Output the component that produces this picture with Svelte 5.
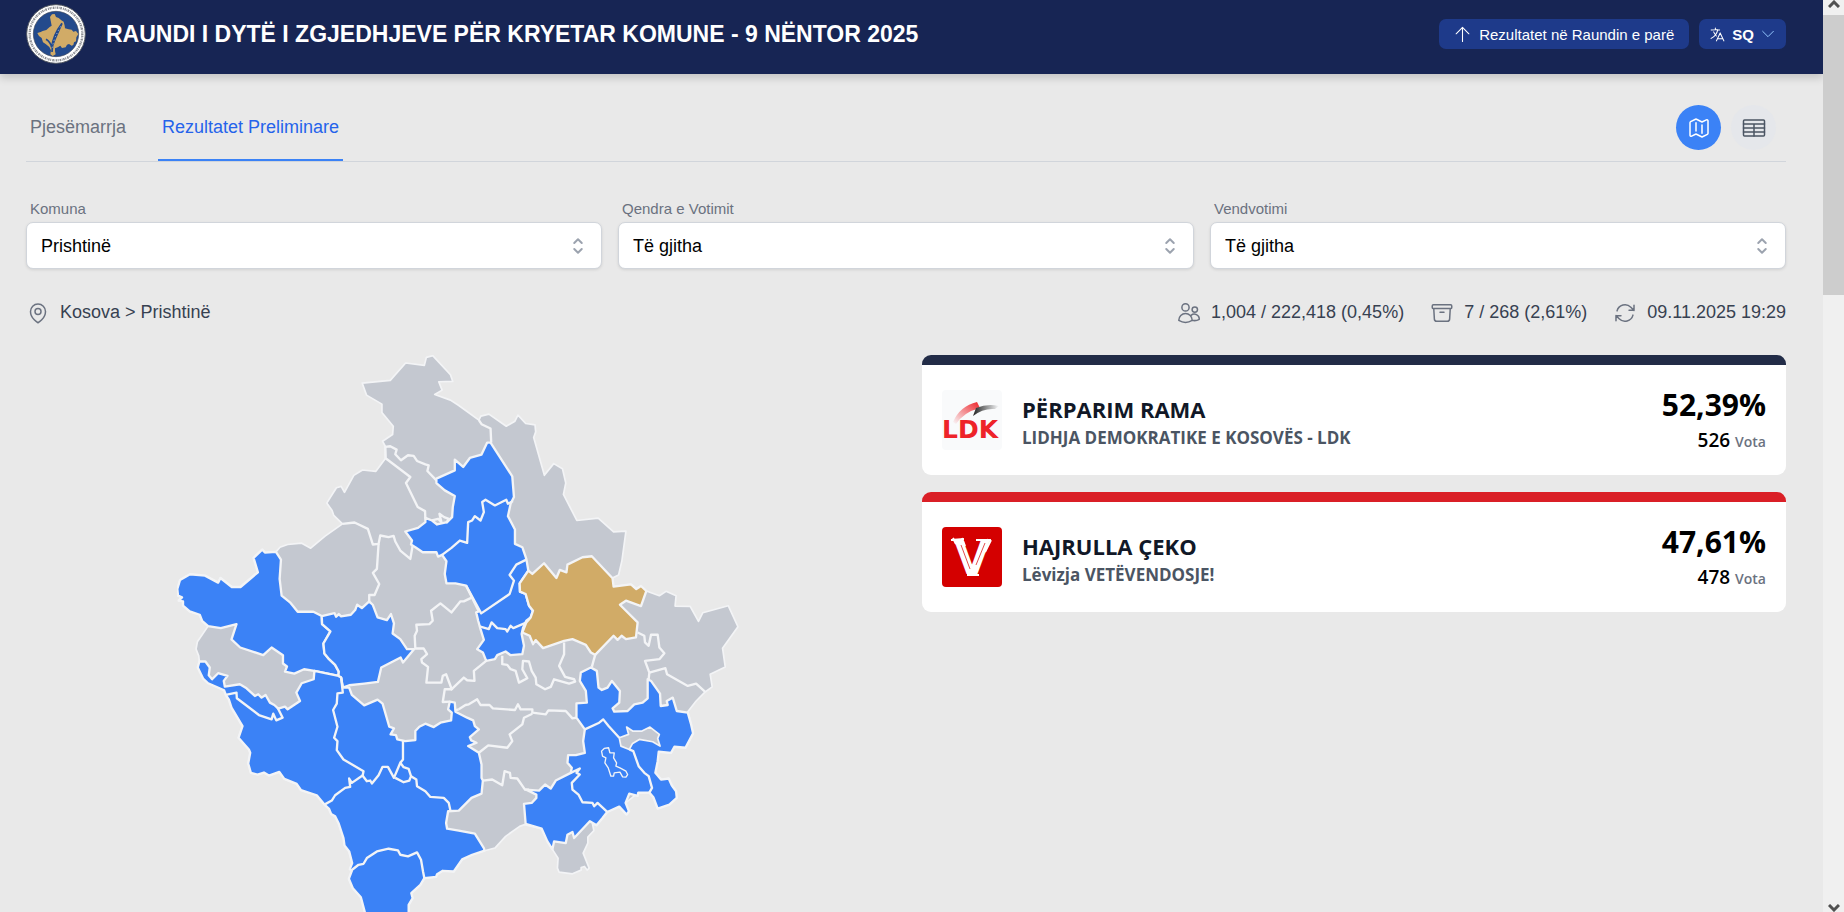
<script>
  let komuna = $state('Prishtinë');
  let qendra = $state('Të gjitha');
  let vendvotimi = $state('Të gjitha');

  const candidates = [
    {
      id: 'ldk',
      name: 'PËRPARIM RAMA',
      party: 'LIDHJA DEMOKRATIKE E KOSOVËS - LDK',
      percent: '52,39%',
      votes: 526,
      color: '#222c47',
    },
    {
      id: 'lvv',
      name: 'HAJRULLA ÇEKO',
      party: 'Lëvizja VETËVENDOSJE!',
      percent: '47,61%',
      votes: 478,
      color: '#da1f26',
    },
  ];

  const country =
    '611,129 695,121 741,69 797,76 803,52 822,47 875,104 882,124 840,125 850,150 828,163 875,180 900,196 960,240 966,228 990,222 1042,258 1068,243 1077,225 1100,250 1128,254 1130,275 1124,292 1156,405 1184,370 1210,385 1220,428 1213,462 1253,540 1317,533 1363,574 1400,572 1388,660 1378,703 1358,713 1363,738 1415,731 1431,745 1445,736 1461,751 1500,765 1520,752 1550,765 1547,796 1592,797 1617,842 1630,816 1706,795 1735,858 1689,922 1697,978 1652,1000 1658,1038 1637,1053 1610,1080 1585,1112 1595,1150 1601,1177 1578,1220 1545,1217 1535,1235 1498,1232 1488,1295 1505,1315 1528,1312 1552,1370 1495,1402 1482,1368 1470,1354 1437,1354 1399,1385 1344,1412 1312,1452 1300,1448 1304,1468 1286,1487 1286,1505 1272,1535 1290,1580 1284,1586 1276,1575 1266,1578 1266,1586 1240,1597 1200,1592 1195,1580 1197,1550 1180,1524 1148,1462 1097,1450 1082,1455 1040,1485 1008,1520 977,1528 940,1540 910,1554 885,1590 852,1588 835,1598 832,1606 797,1610 785,1630 758,1655 762,1670 750,1690 750,1740 760,1790 720,1850 660,1830 625,1760 620,1716 607,1667 583,1640 571,1612 580,1588 574,1583 581,1565 572,1530 558,1512 555,1490 540,1445 530,1425 518,1418 512,1403 498,1390 475,1362 428,1347 415,1328 378,1313 363,1292 332,1303 317,1294 298,1300 278,1295 270,1267 276,1235 272,1225 241,1190 253,1155 220,1100 212,1075 203,1062 198,1048 150,1027 119,980 124,962 122,945 114,925 118,903 150,856 132,840 125,822 95,812 75,795 75,782 62,780 72,770 60,765 58,745 66,718 96,701 141,705 180,726 187,712 221,739 247,739 299,695 286,652 312,627 320,636 353,634 365,620 388,612 430,608 457,623 500,587 552,550 526,525 521,510 505,488 534,442 548,438 558,456 586,405 612,389 652,393 681,354 680,318 672,303 702,283 704,258 670,217 670,192 624,165';

  const won = [
    // west
    '150,856 132,840 125,822 95,812 75,795 75,782 62,780 72,770 60,765 58,745 66,718 96,701 141,705 180,726 187,712 221,739 247,739 299,695 286,652 312,627 320,636 353,634 368,657 364,715 370,765 395,785 418,813 465,813 490,826 491,850 516,872 495,908 498,938 512,955 530,972 541,992 540,1005 468,990 437,985 408,998 380,992 386,977 374,968 374,943 340,920 315,943 246,920 220,896 235,850 188,862',
    '490,826 528,817 533,828 541,820 548,827 577,822 590,808 596,792 610,802 632,782 643,793 657,830 685,838 697,820 706,848 702,878 725,895 745,925 766,925 733,965 726,950 668,980 658,1023 617,1028 572,1033 553,1040 548,1010 540,1005 541,992 530,972 512,955 498,938 495,908 516,872 491,850',
    // south-west
    '124,962 142,962 155,980 152,1003 162,1015 180,997 208,1005 197,1020 200,1037 245,1030 265,1042 290,1065 300,1060 310,1070 322,1062 335,1085 348,1092 360,1103 380,1097 388,1105 425,1080 414,1055 430,1027 466,1015 468,990 540,1005 548,1010 553,1040 572,1040 580,1062 617,1093 657,1076 672,1088 692,1157 706,1162 696,1180 712,1182 716,1195 740,1200 770,1197 770,1170 782,1157 800,1148 825,1158 845,1145 877,1138 879,1115 868,1105 873,1082 888,1085 890,1112 925,1130 943,1138 948,1155 960,1165 933,1188 937,1198 953,1205 928,1215 960,1235 968,1270 968,1310 972,1318 968,1357 938,1370 900,1408 868,1410 862,1445 865,1462 900,1468 948,1477 975,1520 977,1528 940,1540 910,1554 885,1590 852,1588 835,1598 832,1606 797,1610 785,1630 758,1655 762,1670 750,1690 750,1740 760,1790 720,1850 660,1830 625,1760 620,1716 607,1667 583,1640 571,1612 580,1588 574,1583 581,1565 572,1530 558,1512 555,1490 540,1445 530,1425 518,1418 512,1403 498,1390 475,1362 428,1347 415,1328 378,1313 363,1292 332,1303 317,1294 298,1300 278,1295 270,1267 276,1235 272,1225 241,1190 253,1155 220,1100 212,1075 203,1062 198,1048 150,1027 135,1013 119,980',
    // north
    '833,415 888,390 888,358 913,380 933,353 968,343 985,307 995,307 1060,408 1065,470 1055,490 1047,527 1068,567 1068,610 1090,620 1102,655 1108,690 1082,728 1083,753 1100,760 1110,795 1122,810 1115,830 1102,840 1092,862 1088,880 1095,915 1090,940 1055,943 1040,932 1015,943 1008,955 982,960 972,935 955,925 975,897 965,865 958,840 952,815 960,812 922,735 890,728 863,728 858,700 863,662 850,643 838,648 833,635 792,635 770,620 757,612 760,600 740,573 778,562 800,545 800,532 820,540 835,552 865,545 880,530 882,500 888,467 858,450 833,428',
    // south-east
    '1277,1165 1252,1130 1252,1087 1283,1085 1280,1050 1262,1020 1265,995 1295,980 1313,990 1318,1040 1328,1047 1345,1040 1358,1020 1382,1050 1380,1085 1360,1102 1365,1112 1405,1110 1425,1090 1450,1085 1465,1072 1465,1015 1475,1020 1502,1058 1504,1095 1525,1092 1522,1080 1540,1070 1552,1110 1585,1115 1595,1150 1601,1177 1578,1220 1545,1217 1535,1235 1498,1232 1495,1260 1488,1295 1505,1315 1528,1312 1537,1332 1550,1350 1552,1370 1530,1390 1495,1402 1482,1368 1470,1354 1437,1354 1435,1364 1410,1357 1399,1385 1409,1410 1402,1420 1380,1396 1344,1412 1330,1430 1312,1452 1292,1440 1245,1490 1240,1472 1225,1480 1220,1505 1185,1500 1180,1524 1165,1500 1148,1462 1100,1448 1095,1388 1118,1385 1132,1370 1132,1360 1100,1345 1140,1348 1158,1330 1175,1342 1190,1318 1235,1295 1238,1280 1225,1265 1227,1242 1250,1242 1277,1235 1272,1200',
  ];

  const selected =
    '1108,690 1120,700 1155,668 1192,712 1202,688 1222,695 1225,672 1270,650 1298,647 1360,713 1363,738 1415,731 1431,745 1445,736 1461,751 1445,796 1400,780 1382,792 1435,845 1430,890 1400,895 1387,885 1375,897 1363,885 1308,942 1295,935 1280,912 1240,895 1215,900 1152,922 1130,898 1122,910 1112,885 1090,875 1102,845 1115,830 1122,810 1110,795 1100,760 1083,753 1082,728';

  const enclave =
    '1380,1190 1408,1180 1402,1158 1420,1170 1448,1170 1472,1158 1500,1180 1495,1192 1502,1215 1480,1202 1440,1195 1420,1207 1410,1225 1385,1215';

  const borders = [
    '680,320 695,318 714,328 710,342 727,360 748,345 765,347 775,362 800,372 810,375 806,392 833,420',
    '680,318 681,354 755,410 742,428 777,500 799,512 800,535',
    '820,540 838,535 848,545 842,520 856,530 870,535 862,548',
    '552,550 588,546 628,565 643,612 660,610 665,585 690,590 705,586 710,603 725,630 755,655 762,615',
    '660,610 655,685 643,697 662,730 648,763 632,763 632,782',
    '960,240 968,252 995,265 997,307',
    '940,770 915,782 905,782 878,815 845,788 817,810 822,840 812,850 773,852 775,870 768,885 770,923 795,923 805,940 788,955 790,965 808,978 803,1025 848,1025 852,1005 862,1000 880,1048',
    '873,1082 852,1083 858,1045 878,1045 915,1010 925,1018 947,1020 945,990 982,960',
    '900,1105 920,1092 930,1090 955,1075 965,1092 992,1092 1002,1102 1068,1107 1077,1090 1085,1105 1120,1105 1120,1115 1160,1120 1168,1108 1220,1110 1240,1132 1252,1130',
    '888,1108 900,1105',
    '1120,1118 1095,1130 1090,1150 1052,1180 1060,1200 1045,1220 988,1213 960,1235',
    '972,1318 1000,1315 1030,1332 1037,1290 1053,1295 1055,1310 1075,1312 1098,1345 1110,1345',
    '1030,945 1030,970 1045,972 1055,985 1070,990 1080,1025 1105,1012 1090,985 1092,960 1110,962 1118,990 1130,1010 1132,1030 1158,1045 1175,1038 1185,1015 1230,1028 1248,1022 1245,1015 1218,1008 1200,975 1215,940 1215,905',
    '1308,942 1298,978',
    '1435,875 1455,885 1457,905 1468,915 1475,882 1495,882 1500,920 1515,937 1500,955 1457,960 1470,995 1468,1015',
    '1470,995 1518,982 1523,1000 1585,1035 1610,1028 1637,1053',
    '203,1062 235,1055 236,1072 302,1122 340,1135 345,1118 354,1138 373,1130 358,1100',
    '548,1010 553,1055 537,1057 535,1088 524,1107 537,1157 527,1190 537,1200 535,1227 555,1255 615,1290 612,1305',
    '498,1390 520,1378 530,1362 560,1340 575,1337 572,1312 580,1325 612,1303 625,1320 635,1318 640,1327 660,1302 672,1277 688,1277 706,1310 725,1265 735,1278 750,1283 757,1305 752,1318 735,1323 710,1310',
    '725,1265 733,1255 733,1197',
    '757,1305 773,1315 775,1335 800,1350 815,1367 855,1370 870,1385 875,1408',
    '577,1588 600,1570 615,1567 625,1550 655,1530 690,1522 718,1527 725,1540 748,1545 775,1533 787,1555 793,1590 797,1610',
    '850,643 878,622 903,600 925,607 928,545 940,540 948,527 965,540 975,515 970,485 980,478 1008,495 1042,478 1047,490 1062,482',
    '922,735 967,818 1052,760 1065,720 1052,703 1072,672 1102,657',
    '962,857 990,865 998,845 1015,862 1040,865 1045,872 1055,855 1063,862 1103,845',
    '1277,1165 1320,1145 1332,1135 1348,1155 1380,1190',
    '1410,1225 1422,1230 1438,1275 1455,1295 1468,1305 1478,1340 1470,1354',
    '1235,1295 1262,1282 1252,1295 1262,1300 1238,1325 1240,1345 1258,1360 1270,1383 1300,1385 1305,1395 1315,1385 1344,1412',
  ];
</script>

{#snippet icon(name)}
  <svg
    class="icon icon-{name}"
    viewBox="0 0 24 24"
    fill="none"
    stroke="currentColor"
    stroke-width="1.5"
    stroke-linecap="round"
    stroke-linejoin="round"
    aria-hidden="true"
  >
    {#if name === 'arrow-up'}
      <path d="M12 22V2M3 11l9-9 9 9" />
    {:else if name === 'language'}
      <path
        d="m10.5 21 5.25-11.25L21 21m-9-3h7.5M3 5.621a48.474 48.474 0 0 1 6-.371m0 0c1.12 0 2.233.038 3.334.114M9 5.25V3m3.334 2.364C11.176 10.658 7.69 15.08 3 17.502m9.334-12.138c.896.061 1.785.147 2.666.257m-4.589 8.495a18.023 18.023 0 0 1-3.827-5.802"
      />
    {:else if name === 'chevron-down'}
      <path d="m4 8 8 8 8-8" />
    {:else if name === 'map'}
      <path
        d="M9 6.75V15m6-6v8.25m.503 3.498 4.875-2.437c.381-.19.622-.58.622-1.006V4.82c0-.836-.88-1.38-1.628-1.006l-3.869 1.934c-.317.159-.69.159-1.006 0L9.503 3.252a1.125 1.125 0 0 0-1.006 0L3.622 5.689C3.24 5.88 3 6.27 3 6.695V19.18c0 .836.88 1.38 1.628 1.006l3.869-1.934c.317-.159.69-.159 1.006 0l4.994 2.497c.317.158.69.158 1.006 0Z"
      />
    {:else if name === 'table'}
      <rect x="1.5" y="4" width="21" height="16" rx="1" />
      <path d="M1.5 8h21M1.5 12h21M1.5 16h21M12 8v12" />
    {:else if name === 'up-down'}
      <path d="M8.25 15 12 18.75 15.75 15m-7.5-6L12 5.25 15.75 9" />
    {:else if name === 'pin'}
      <path d="M15 10.5a3 3 0 1 1-6 0 3 3 0 0 1 6 0Z" />
      <path
        d="M19.5 10.5c0 7.142-7.5 11.25-7.5 11.25S4.5 17.642 4.5 10.5a7.5 7.5 0 1 1 15 0Z"
      />
    {:else if name === 'users'}
      <circle cx="8.5" cy="6.4" r="3.6" />
      <circle cx="17.8" cy="8.6" r="2.7" />
      <path
        d="M1.8 19.2a6.7 6.7 0 0 1 13.4 0v.2a13 13 0 0 1-13.4 0zM15.2 19.3a9.3 9.3 0 0 0 7.1-1 5 5 0 0 0-8.2-4"
      />
    {:else if name === 'box'}
      <path
        d="m20.25 7.5-.625 10.632a2.25 2.25 0 0 1-2.247 2.118H6.622a2.25 2.25 0 0 1-2.247-2.118L3.75 7.5M10 11.25h4M3.375 7.5h17.25c.621 0 1.125-.504 1.125-1.125v-1.5c0-.621-.504-1.125-1.125-1.125H3.375c-.621 0-1.125.504-1.125 1.125v1.5c0 .621.504 1.125 1.125 1.125Z"
      />
    {:else if name === 'refresh'}
      <path
        d="M16.023 9.348h4.992v-.001M2.985 19.644v-4.992m0 0h4.992m-4.993 0 3.181 3.183a8.25 8.25 0 0 0 13.803-3.7M4.031 9.865a8.25 8.25 0 0 1 13.803-3.7l3.181 3.182m0-4.991v4.99"
      />
    {/if}
  </svg>
{/snippet}

<div class="window">
  <div class="page">
    <header>
      <svg class="seal" viewBox="78 12 180 180" aria-hidden="true">
        <circle cx="168" cy="102" r="88" fill="#fff" stroke="#555a63" stroke-width="3" />
        <circle
          cx="168"
          cy="102"
          r="79"
          fill="none"
          stroke="#8b8d92"
          stroke-width="7"
          stroke-dasharray="3 2 4 2 2 2 5 3"
        />
        <circle cx="168" cy="102" r="68" fill="#234a8c" stroke="#3d4657" stroke-width="2" />
        <path
          d="M150 51l6-8 8-1 4 9 8 3 8 7 7 4 3 12 1 8 11 3 9 1 5 6 8-2 7 9-6 10-1 12-6 3-2 8-5 2-8-5-6 2-4 8-11 2-5-7-8 5-8 3v8l2 10-9 5-7-5 2-12-5-10-11-9-8-5-4-13-8-6-5-9 10-3 6-3 11-3 10-9 6-4z"
          fill="#d1ab67"
        />
        <path
          d="M138 118q13 7 17 24 5-38 31-72-14 31-23 52-7 14-7 34"
          fill="none"
          stroke="#234a8c"
          stroke-width="5"
        />
        <path d="M157 143q4-29 27-67" fill="none" stroke="#fff" stroke-width="2" stroke-dasharray="3 8" />
      </svg>
      <h1>RAUNDI I DYTË I ZGJEDHJEVE PËR KRYETAR KOMUNE - 9 NËNTOR 2025</h1>
      <a class="first-round" href="#raundi-i-pare">
        {@render icon('arrow-up')}
        Rezultatet në Raundin e parë
      </a>
      <button class="language" type="button">
        {@render icon('language')}
        <b>SQ</b>
        {@render icon('chevron-down')}
      </button>
    </header>

    <main>
      <nav>
        <a class="tab" href="#pjesemarrja">Pjesëmarrja</a>
        <a class="tab tab-active" href="#rezultatet">Rezultatet Preliminare</a>
        <div class="views">
          <button class="view view-active" type="button" aria-label="Harta">
            {@render icon('map')}
          </button>
          <button class="view" type="button" aria-label="Tabela">
            {@render icon('table')}
          </button>
        </div>
      </nav>

      <div class="filters">
        <div class="filter">
          <label for="komuna">Komuna</label>
          <div class="select">
            <select id="komuna" bind:value={komuna}>
              <option>Prishtinë</option>
            </select>
            {@render icon('up-down')}
          </div>
        </div>
        <div class="filter">
          <label for="qendra">Qendra e Votimit</label>
          <div class="select">
            <select id="qendra" bind:value={qendra}>
              <option>Të gjitha</option>
            </select>
            {@render icon('up-down')}
          </div>
        </div>
        <div class="filter">
          <label for="vendvotimi">Vendvotimi</label>
          <div class="select">
            <select id="vendvotimi" bind:value={vendvotimi}>
              <option>Të gjitha</option>
            </select>
            {@render icon('up-down')}
          </div>
        </div>
      </div>

      <div class="summary">
        <span class="stat place">{@render icon('pin')}Kosova &gt; Prishtinë</span>
        <span class="stat">{@render icon('users')}1,004 / 222,418 (0,45%)</span>
        <span class="stat">{@render icon('box')}7 / 268 (2,61%)</span>
        <span class="stat">{@render icon('refresh')}09.11.2025 19:29</span>
      </div>

      <div class="results">
        <svg class="map" viewBox="57 45 1680 1815" role="img" aria-label="Kosova">
          <polygon class="region" points={country} />
          {#each won as points}
            <polygon class="region region-won" {points} />
          {/each}
          <polygon class="region" points={enclave} />
          {#each borders as points}
            <polyline class="border" {points} />
          {/each}
          <polygon
            class="border border-thin"
            points="1327,1230 1335,1222 1348,1220 1352,1235 1365,1235 1363,1250 1372,1265 1370,1275 1382,1280 1400,1290 1405,1300 1400,1308 1390,1307 1382,1293 1365,1295 1363,1305 1355,1305 1347,1280 1337,1265 1340,1250 1330,1245"
          />
          <polygon class="region region-selected" points={selected} />
        </svg>

        <div class="candidates">
          {#each candidates as c}
            <article style="border-top-color: {c.color}">
              {#if c.id === 'ldk'}
                <svg class="party" viewBox="0 0 60 60" role="img" aria-label="LDK">
                  <defs>
                    <linearGradient id="red-fade" x1="0" y1="1" x2="1" y2="0">
                      <stop offset="0" stop-color="#f9fafb" />
                      <stop offset="1" stop-color="#ee2329" />
                    </linearGradient>
                    <linearGradient id="black-fade">
                      <stop offset="0" stop-color="#222" />
                      <stop offset="1" stop-color="#f9fafb" />
                    </linearGradient>
                  </defs>
                  <rect width="60" height="60" rx="4" fill="#f9fafb" />
                  <path d="M11 32Q18 16 35 12l3 6Q22 22 14 34z" fill="url(#red-fade)" />
                  <path d="M34 18Q46 13 57 16l-4 3q-12-1-22 7z" fill="url(#black-fade)" />
                  <text x="0" y="48">LDK</text>
                </svg>
              {:else}
                <svg class="party" viewBox="0 0 60 60" role="img" aria-label="Vetëvendosje">
                  <rect width="60" height="60" rx="4" fill="#d40000" />
                  <text class="party-v" x="30" y="47">V</text>
                  <path
                    d="M9 13l13-1M11 11l3 6M20 11l3 8M34 13h15M46 12L34 43M49 13l-6 12M25 48h12M27 45v4"
                    fill="none"
                    stroke="#fff"
                    stroke-width="2"
                  />
                  <path d="M19 18l9 24M43 16l-9 22" fill="none" stroke="#d40000" stroke-width="0.7" />
                </svg>
              {/if}
              <div class="who">
                <h2>{c.name}</h2>
                <p>{c.party}</p>
              </div>
              <div class="score">
                <strong>{c.percent}</strong>
                <span>{c.votes} <small>Vota</small></span>
              </div>
            </article>
          {/each}
        </div>
      </div>
    </main>
  </div>

  <div class="scrollbar" aria-hidden="true">
    <svg viewBox="0 0 12 8"><path d="M1 7l5-5 5 5" /></svg>
    <div class="thumb"></div>
    <svg viewBox="0 0 12 8"><path d="M1 1l5 5 5-5" /></svg>
  </div>
</div>

<style>
  :global(body) {
    margin: 0;
    background: #e9e9e9;
  }

  .window {
    display: flex;
    height: 100vh;
    overflow: hidden;
    font-family: 'Liberation Sans', Arial, sans-serif;
    font-size: 18px;
    color: #374151;
  }

  .page {
    flex: 1;
    min-width: 0;
  }

  .icon {
    flex: none;
    width: 24px;
    height: 24px;
  }

  header {
    display: flex;
    align-items: center;
    gap: 10px;
    padding: 4px 37px 10px 26px;
    background: #172554;
    color: #fff;
    box-shadow: 0 4px 8px rgba(0, 0, 0, 0.16);
  }

  .seal {
    flex: none;
    width: 60px;
    height: 60px;
    margin-right: 10px;
  }

  h1 {
    flex: 1;
    margin: 0;
    font-size: 23px;
    line-height: 28px;
    white-space: nowrap;
  }

  .first-round,
  .language {
    display: flex;
    align-items: center;
    height: 30px;
    border: 0;
    border-radius: 7px;
    background: #1e3a8a;
    color: #fff;
    font-family: inherit;
    font-size: 15px;
    text-decoration: none;
    white-space: nowrap;
  }

  .first-round {
    gap: 8px;
    padding: 0 15px;
  }

  .language {
    gap: 6px;
    padding: 0 10px;
  }

  .icon-arrow-up,
  .icon-language {
    width: 17px;
    height: 17px;
  }

  .icon-chevron-down {
    width: 16px;
    height: 16px;
    color: #93c5fd;
  }

  main {
    padding: 24px 37px 0 26px;
  }

  nav {
    display: flex;
    gap: 28px;
    height: 63px;
    border-bottom: 1px solid #d1d5db;
  }

  .tab {
    padding: 0 4px;
    border-bottom: 2px solid transparent;
    color: #6b7280;
    line-height: 59px;
    text-decoration: none;
  }

  .tab-active {
    border-color: #3b82f6;
    color: #2563eb;
  }

  .views {
    display: flex;
    gap: 10px;
    margin: 7px 10px 0 auto;
  }

  .view {
    display: flex;
    align-items: center;
    justify-content: center;
    width: 45px;
    height: 45px;
    padding: 0;
    border: 0;
    border-radius: 50%;
    background: #e5e7eb;
    color: #4b5563;
  }

  .view-active {
    background: #3b82f6;
    color: #fff;
  }

  .filters {
    display: grid;
    grid-template-columns: repeat(3, 1fr);
    gap: 16px;
    padding-top: 36px;
  }

  label {
    display: block;
    padding: 0 4px 2px;
    color: #6b7280;
    font-size: 15px;
    line-height: 22px;
  }

  .select {
    position: relative;
  }

  select {
    display: block;
    width: 100%;
    height: 47px;
    padding: 0 14px;
    border: 1px solid #d1d5db;
    border-radius: 7px;
    background: #fff;
    box-shadow: 0 1px 3px rgba(0, 0, 0, 0.1);
    color: #000;
    font: inherit;
    appearance: none;
  }

  .icon-up-down {
    position: absolute;
    top: 12px;
    right: 12px;
    color: #9ca3af;
    stroke-width: 2;
    pointer-events: none;
  }

  .summary {
    display: flex;
    gap: 26px;
    padding: 31px 0 30px;
    line-height: 25px;
  }

  .stat {
    display: flex;
    align-items: center;
    gap: 10px;
  }

  .stat .icon {
    color: #6b7280;
  }

  .place {
    margin-right: auto;
  }

  .results {
    display: grid;
    grid-template-columns: 1fr 1fr;
    gap: 32px;
    align-items: start;
  }

  .map {
    justify-self: center;
    width: 65%;
  }

  .region {
    fill: #c4c8d0;
    stroke: #f3f4f6;
    stroke-width: 5;
    stroke-linejoin: round;
  }

  .region-won {
    fill: #3b82f6;
    stroke-width: 7;
  }

  .region-selected {
    fill: #d1ab67;
    stroke-width: 7;
  }

  .border {
    fill: none;
    stroke: #f3f4f6;
    stroke-width: 7;
    stroke-linejoin: round;
  }

  .border-thin {
    stroke-width: 4;
  }

  .candidates {
    display: grid;
    gap: 17px;
  }

  article {
    display: flex;
    align-items: center;
    gap: 20px;
    height: 110px;
    padding: 0 20px;
    border-top: 10px solid;
    border-radius: 9px;
    background: #fff;
    font-family: 'Open Sans', 'Noto Sans', sans-serif;
  }

  .party {
    flex: none;
    width: 60px;
    height: 60px;
  }

  .party text {
    fill: #ee2329;
    font: bold 25px 'DejaVu Sans', sans-serif;
  }

  .party .party-v {
    fill: #fff;
    font-size: 48px;
    text-anchor: middle;
  }

  .who,
  .score {
    padding-top: 6px;
  }

  .who {
    flex: 1;
  }

  h2,
  p {
    margin: 0;
    font-weight: 700;
  }

  h2 {
    color: #111827;
    font-size: 22px;
    line-height: 30px;
  }

  p {
    color: #4b5563;
    font-size: 17px;
    line-height: 28px;
  }

  .score {
    display: flex;
    flex-direction: column;
    align-items: flex-end;
    color: #000;
  }

  strong {
    font-size: 30px;
    line-height: 36px;
  }

  .score span {
    font-size: 19px;
    font-weight: 600;
    line-height: 34px;
  }

  small {
    color: #6b7280;
    font-size: 14px;
  }

  .scrollbar {
    display: flex;
    flex-direction: column;
    align-items: center;
    width: 21px;
    background: #f0f0f0;
  }

  .scrollbar svg {
    width: 12px;
    height: 8px;
    padding-bottom: 7px;
    fill: none;
    stroke: #505050;
    stroke-width: 3;
  }

  .scrollbar svg:last-child {
    margin-top: auto;
    padding-bottom: 0;
  }

  .thumb {
    width: 100%;
    height: 280px;
    background: #cdcdcd;
  }
</style>
